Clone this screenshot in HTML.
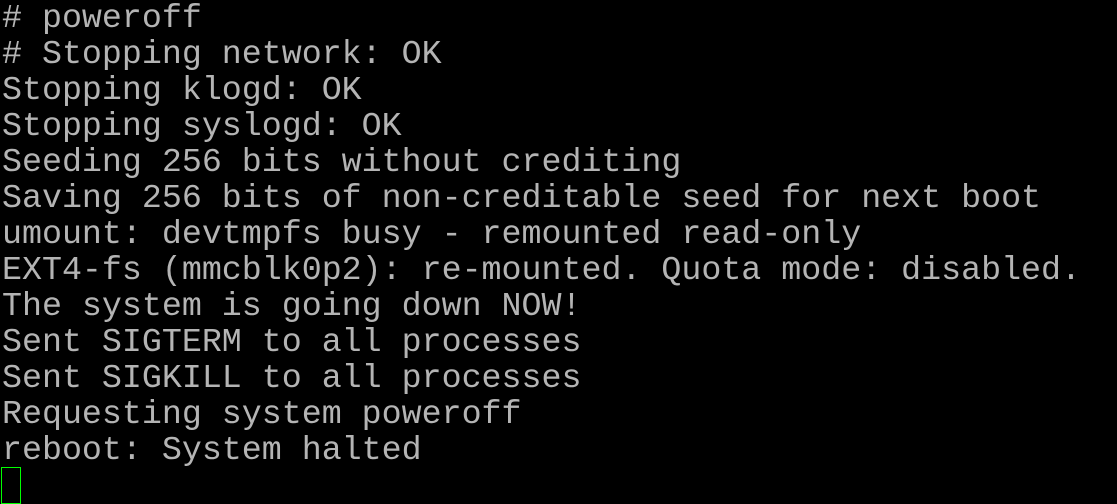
<!DOCTYPE html>
<html><head><style>
html,body{margin:0;padding:0;background:#000;width:1117px;height:502px;overflow:hidden}
pre{margin:0;position:absolute;left:2px;top:0px;font-family:"Liberation Mono",monospace;font-size:33.3px;line-height:36px;color:#b4b4b4}
.cur{position:absolute;left:1px;top:467px;width:18px;height:35px;border:1px solid #00ff00;box-sizing:content-box}
</style></head><body>
<pre># poweroff
# Stopping network: OK
Stopping klogd: OK
Stopping syslogd: OK
Seeding 256 bits without crediting
Saving 256 bits of non-creditable seed for next boot
umount: devtmpfs busy - remounted read-only
EXT4-fs (mmcblk0p2): re-mounted. Quota mode: disabled.
The system is going down NOW!
Sent SIGTERM to all processes
Sent SIGKILL to all processes
Requesting system poweroff
reboot: System halted</pre>
<div class="cur"></div>
</body></html>
